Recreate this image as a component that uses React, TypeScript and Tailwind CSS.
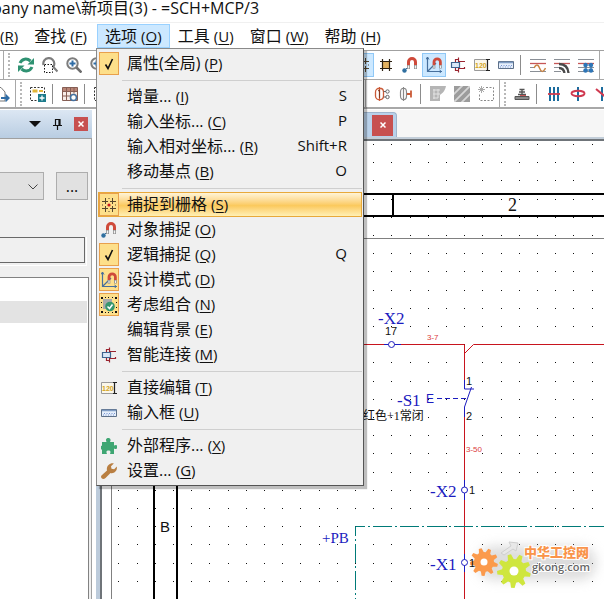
import type { ReactNode } from "react";
import { clsx } from "clsx";

function Svg({ children, size = 16 }: { children: ReactNode; size?: number }) {
  return (
    <svg width={size} height={size} viewBox="0 0 16 16" fill="none" className="shrink-0" aria-hidden="true">
      {children}
    </svg>
  );
}

const CheckIcon = () => (
  <Svg>
    <path d="M4.5 8.5l2.5 4 4.500-9.500" stroke="#111" strokeWidth="1.600" />
  </Svg>
);

const GridIcon = () => (
  <Svg>
    <path d="M4.500 1v6M1 4.500h6M11.500 1v6M9 4.500h6M4.500 9v6M1 11.500h6M11.500 9v6M9 11.500h6" stroke="#54452c" />
    <path d="M8 1v1M8 14v1M1 8h1M14 8h1" stroke="#54452c" />
    <circle cx="8" cy="8" r="1.600" fill="#c81e1e" />
  </Svg>
);

const MagnetIcon = () => (
  <Svg>
    <path d="M6.500 8V5a3.500 3.500 0 0 1 7 0v3" stroke="#cf4a3a" strokeWidth="3" />
    <path d="M6.500 8v4M13.500 8v4" stroke="#8a8a8a" strokeWidth="3" />
    <path d="M6.500 8.500v3M13.500 8.500v3" stroke="#f2f2f2" strokeWidth="1.500" />
    <circle cx="2.500" cy="13.500" r="2.200" fill="#2f6f9f" />
    <path d="M3 13l2-2" stroke="#2f6f9f" />
  </Svg>
);

const DesignIcon = () => (
  <Svg>
    <path d="M1.500 0v14.500H16M1.500 14.500L10 6" stroke="#466f9c" strokeWidth="1.200" />
    <path d="M0 2.500L1.500 0 3 2.500M13.500 13l2 1.500-2 1.500" stroke="#466f9c" />
    <path d="M8 8V5a3.200 3.200 0 0 1 6.400 0v3" stroke="#cf4a3a" strokeWidth="2.800" />
    <path d="M8 8v3.500M14.400 8v3.500" stroke="#888" strokeWidth="2.600" />
    <path d="M8 8.500v2.500M14.400 8.500v2.500" stroke="#fff" />
  </Svg>
);

const GroupIcon = () => (
  <Svg>
    <path d="M2 2h9v4H7v6H2z" fill="#a9a9a9" />
    <path
      d="M0 0h2v2H0zM4 0h1v1H4zM7 0h1v1H7zM11 0h1v1h-1zM14 0h2v2h-2zM0 14h2v2H0zM4 15h1v1H4zM7 15h1v1H7zM11 15h1v1h-1zM14 14h2v2h-2zM0 5h1v1H0zM0 10h1v1H0zM15 5h1v1h-1zM15 10h1v1h-1z"
      fill="#111"
    />
    <circle cx="9" cy="9.500" r="4.800" fill="#37966f" />
    <path d="M6.500 9.500l2 2 3-4" stroke="#fff" strokeWidth="1.500" />
  </Svg>
);

const ConnectIcon = () => (
  <Svg>
    <path d="M5.500 5.500v-3H9M8.500 .500v4H15M5.500 10.500v3H9M8.500 15.500v-4H15M14.500 10v2" stroke="#9a2530" strokeWidth="1.200" />
    <path d="M1.500 5.500h8v5h-8z" fill="#d9e8f8" stroke="#3d648f" strokeWidth="1.200" />
  </Svg>
);

const EditIcon = () => (
  <Svg>
    <path d="M.5 2.500h13v11H.5z" fill="#fbf7ea" stroke="#9a9a9a" />
    <text x="1" y="11" fontSize="7" fontWeight="700" fontFamily="Liberation Sans, sans-serif" fill="#d3a523">
      120
    </text>
    <path d="M13.500 3v10M12 2.500h4M12 13.500h4" stroke="#222" strokeWidth="1.200" />
  </Svg>
);

const InputBoxIcon = () => (
  <Svg>
    <path d="M.5 4.500h15v7H.5z" fill="#e6effb" stroke="#5d7089" />
    <path d="M1 5.500h14" stroke="#7f9cc4" strokeWidth="1.500" />
    <path d="M3 8.500h11M2 10h11" stroke="#7895d2" strokeDasharray="1 1.500" />
  </Svg>
);

const PuzzleIcon = () => (
  <Svg>
    <path
      d="M1 4h4.500C4 1 6 0 7.300 0S10.500 1 9 4h4v3.500c3-1.500 3.500.5 3.500 1.500s-.5 3-3.500 1.500V16H9c1.300-3-.3-3.500-1.500-3.500S4.500 13 6 16H1v-4.500c-2 .7-2 -4.500 0-3.500z"
      fill="#3fa673"
    />
  </Svg>
);

const WrenchIcon = () => (
  <Svg>
    <path
      d="M.7 15.300c-1.200-1.300-.7-2.500.3-3.300l5-4.500C5 3.500 8.500-.3 12.800.4L10 3.200l.5 2.600 2.700.4L15.800 3.600c.8 4.400-2.700 7.400-6.300 6.400l-5 5c-1.200 1-2.600 1.400-3.800.3z"
      fill="#b97f42"
    />
  </Svg>
);

const RefreshIcon = () => (
  <Svg>
    <path d="M2 6C4 1.500 9 1 12.500 4" stroke="#2f9272" strokeWidth="3" />
    <path d="M16 1v6.500H9.500z" fill="#2f9272" />
    <path d="M14 10c-2 4.500-7 5-10.500 2" stroke="#2f9272" strokeWidth="3" />
    <path d="M0 15V8.500h6.500z" fill="#2f9272" />
  </Svg>
);

const ZoomAreaIcon = () => (
  <Svg>
    <path d="M1.500 8a5.500 5.500 0 1 1 10.800-1c0 1-.3 2-1 3l4.200 4.500" stroke="#7d7d7d" strokeWidth="2.200" />
    <path d="M2.500 7.500h8v8h-8z" fill="#fff" stroke="#111" strokeDasharray="1.500 1.500" />
  </Svg>
);

const ZoomInIcon = () => (
  <Svg>
    <circle cx="6.500" cy="6.500" r="5.200" stroke="#7d7d7d" strokeWidth="2" />
    <path d="M10.500 10.500l5 5" stroke="#6d6d6d" strokeWidth="2.600" />
    <path d="M6.500 3.500v6M3.500 6.500h6" stroke="#2f6ca5" strokeWidth="2" />
  </Svg>
);

const HashIcon = () => (
  <Svg>
    <path d="M5 5h7v7H5z" fill="#e3b261" />
    <path d="M4.500 2v12M11.500 2v12M2 4.500h12M2 11.500h12" stroke="#2c2010" strokeWidth="1.200" />
  </Svg>
);

const WaveIcon = () => (
  <Svg>
    <path d="M0 2.500h16M0 10.500h5M0 14.500h16" stroke="#8a8f96" />
    <path d="M0 6.500h16" stroke="#c65757" strokeWidth="1.300" />
    <path d="M4 11c2-4 4-4 5.500 0s3.500 5 6 0" stroke="#c98446" strokeWidth="1.500" />
  </Svg>
);

const SignalIcon = () => (
  <Svg>
    <path d="M0 2.500h16M0 10.500h5M0 14.500h7" stroke="#8a8f96" />
    <path d="M0 6.500h16" stroke="#c65757" strokeWidth="1.300" />
    <path d="M5 7c6 0 9 3 9.500 9M5 11c3 0 5 2 5.500 5" stroke="#4a4a4a" strokeWidth="2.400" />
  </Svg>
);

const NodesIcon = () => (
  <Svg>
    <path d="M0 2.500h16M0 10.500h16M0 14.500h16" stroke="#8a8f96" />
    <path d="M0 6.500h16" stroke="#c65757" strokeWidth="1.300" />
    <path d="M8 8h5v5H8z" stroke="#2f6ca5" />
    <g fill="#2e75b6">
      <circle cx="7.500" cy="8" r="2.200" />
      <circle cx="13" cy="8" r="2.200" />
      <circle cx="7.500" cy="13.500" r="2.200" />
      <circle cx="13" cy="13.500" r="2.200" />
    </g>
  </Svg>
);

const ExportIcon = () => (
  <Svg>
    <path d="M1 1.500h6L11 6v9H1z" fill="#fff" stroke="#777" />
    <path d="M7 11h4.500V7.500L16 12l-4.500 4.500V13H7z" fill="#2f6ca5" />
  </Svg>
);

const MacroIcon = () => (
  <Svg>
    <path d="M.5 1.500h14v13H.5z" stroke="#333" strokeDasharray="2 1.500" />
    <path d="M2.500 3.500h5v3h-5zM9 4h4v2H9z" fill="#e2b63a" />
    <path d="M8 8h8v8H8z" fill="#1d7c8c" />
    <path d="M12 9.500v5M9.500 12h5" stroke="#fff" strokeWidth="1.300" />
  </Svg>
);

const TableIcon = () => (
  <Svg>
    <path d="M.5 1.500h15v13H.5z" fill="#f7ece7" />
    <path d="M.5 1.500h15v4H.5z" fill="#b98576" />
    <path d="M.5 1.500h15v13H.5zM.5 5.500h15M.5 10h9M4.500 1.500v13M8.500 1.500v13M12 1.500v6" stroke="#865f55" />
    <circle cx="11.500" cy="11.500" r="3" fill="#fff" stroke="#44719f" strokeWidth="1.600" />
  </Svg>
);

const DeviceIcon = () => (
  <Svg>
    <path d="M5.500 1v14M1.500 6c0-5 8-5 8 0v4c0 5-8 5-8 0z" stroke="#cb5b38" strokeWidth="1.300" />
    <path d="M4 5l1.500-1v8" stroke="#8a3a20" />
    <path d="M9.500 5.500H12M9.500 11H12" stroke="#666" />
    <circle cx="13.500" cy="5.500" r="1.700" stroke="#666" />
    <circle cx="13.500" cy="11" r="1.700" stroke="#666" />
  </Svg>
);

const DevicePinIcon = () => (
  <Svg>
    <path d="M5.500 1v14M2.500 6c0-5 6-5 6 0v4c0 5-6 5-6 0z" stroke="#888" strokeWidth="1.200" />
    <path d="M9 8h4M13 4.500v7" stroke="#cb5b38" strokeWidth="1.800" />
  </Svg>
);

const LayerIcon = () => (
  <Svg>
    <path d="M0 0h16c-1 6-5 8-6 9v6H0z" fill="#b5b5b5" />
    <path d="M3 4h7M3 8h7M3 12h5M4 3v10M8 3v9" stroke="#e3e3e3" />
  </Svg>
);

const HatchIcon = () => (
  <Svg>
    <path d="M0 0h16v16H0z" fill="#9c9c9c" />
    <path d="M-1 9L9-1M-1 17L17-1M7 17L17 7" stroke="#d6d6d6" strokeWidth="1.800" />
  </Svg>
);

const SelectNewIcon = () => (
  <Svg>
    <path d="M8 1.500h7.500v13H1.500V8" stroke="#8a8a8a" strokeDasharray="2 1.500" />
    <path d="M3.500 0v7M0 3.500h7M1 1l5 5M6 1L1 6" stroke="#aaa" />
  </Svg>
);

const PlatformIcon = () => (
  <Svg>
    <path d="M1 10.500h14v3H1z" fill="#8c8c8c" stroke="#555" />
    <path d="M4 8.500h8M8 3v6M5.500 3.500h5M5 6h6" stroke="#555" strokeWidth="1.400" />
    <path d="M6 9.500h6" stroke="#c65757" />
  </Svg>
);

const BusIcon = () => (
  <Svg>
    <path d="M4 1v14M8 1v14M12 1v14" stroke="#1b6c9e" strokeWidth="2" />
    <path d="M2 8h12" stroke="#d03a50" strokeWidth="1.800" />
  </Svg>
);

const LoopIcon = () => (
  <Svg>
    <path d="M8 1v14" stroke="#1b6c9e" strokeWidth="2" />
    <ellipse cx="8" cy="7.500" rx="6.500" ry="2.700" stroke="#d03a50" strokeWidth="1.900" />
  </Svg>
);

const BranchIcon = () => (
  <Svg>
    <path d="M8 1v14" stroke="#1b6c9e" strokeWidth="2" />
    <path d="M2 3l12 10" stroke="#d03a50" strokeWidth="2" />
  </Svg>
);

function Tool({ label, active, children }: { label: string; active?: boolean; children: ReactNode }) {
  return (
    <button
      aria-label={label}
      className={clsx(
        "flex h-6 w-6 shrink-0 items-center justify-center border",
        active ? "border-[#90c8f6] bg-[#cce8ff]" : "border-transparent"
      )}
    >
      {children}
    </button>
  );
}

const Separator = () => <span className="mr-[5px] ml-0.5 h-5 w-px shrink-0 bg-[#8c8c8c]" />;

function Grip() {
  return (
    <>
      <span className="mx-px w-px shrink-0 self-stretch bg-[#a8a8a8]" />
      <span className="mr-1 ml-[3px] h-6 shrink-0 border-l-2 border-dotted border-[#b8b8b8]" />
    </>
  );
}

function Toolbars() {
  return (
    <div className="border-t border-[#a0a0a0] bg-white">
      <div className="flex h-[29px] items-center border-b border-[#a8a8a8] pl-0.5">
        <Grip />
        <Tool label="刷新"><RefreshIcon /></Tool>
        <Tool label="缩放区域"><ZoomAreaIcon /></Tool>
        <Tool label="放大"><ZoomInIcon /></Tool>
        <Tool label="缩小"><ZoomInIcon /></Tool>
        <span className="w-60 shrink-0" />
        <Tool label="捕捉到栅格" active><GridIcon /></Tool>
        <Tool label="栅格"><HashIcon /></Tool>
        <Tool label="对象捕捉"><MagnetIcon /></Tool>
        <Tool label="设计模式" active><DesignIcon /></Tool>
        <Tool label="智能连接"><ConnectIcon /></Tool>
        <Tool label="直接编辑"><EditIcon /></Tool>
        <Tool label="输入框"><InputBoxIcon /></Tool>
        <Separator />
        <Tool label="波形"><WaveIcon /></Tool>
        <Tool label="信号"><SignalIcon /></Tool>
        <Tool label="节点"><NodesIcon /></Tool>
        <span className="ml-px w-px self-stretch bg-[#a8a8a8]" />
      </div>
      <div className="flex h-[29px] items-center border-b-2 border-[#a8a8a8]">
        <span className="-ml-2.5 flex shrink-0"><Tool label="导出"><ExportIcon /></Tool></span>
        <Grip />
        <Tool label="宏"><MacroIcon /></Tool>
        <Separator />
        <Tool label="表格"><TableIcon /></Tool>
        <Separator />
        <Tool label="选择"><MacroIcon /></Tool>
        <span className="w-[251px] shrink-0" />
        <span className="mr-1 w-px shrink-0 self-stretch bg-[#a8a8a8]" />
        <Tool label="设备"><DeviceIcon /></Tool>
        <Tool label="设备连接点"><DevicePinIcon /></Tool>
        <Separator />
        <Tool label="图层"><LayerIcon /></Tool>
        <Tool label="填充"><HatchIcon /></Tool>
        <Tool label="新建选择"><SelectNewIcon /></Tool>
        <Grip />
        <Tool label="安装"><PlatformIcon /></Tool>
        <Separator />
        <Tool label="母线"><BusIcon /></Tool>
        <Tool label="屏蔽"><LoopIcon /></Tool>
        <Tool label="分支"><BranchIcon /></Tool>
      </div>
    </div>
  );
}

type MenuEntry = {
  label: string;
  mnemonic: string;
  shortcut?: string;
  icon?: ReactNode;
  checked?: boolean;
  selected?: boolean;
};

const menuGroups: MenuEntry[][] = [
  [{ label: "属性(全局)", mnemonic: "P", icon: <CheckIcon />, checked: true }],
  [
    { label: "增量...", mnemonic: "I", shortcut: "S" },
    { label: "输入坐标...", mnemonic: "C", shortcut: "P" },
    { label: "输入相对坐标...", mnemonic: "R", shortcut: "Shift+R" },
    { label: "移动基点", mnemonic: "B", shortcut: "O" },
  ],
  [
    { label: "捕捉到栅格", mnemonic: "S", icon: <GridIcon />, checked: true, selected: true },
    { label: "对象捕捉", mnemonic: "O", icon: <MagnetIcon /> },
    { label: "逻辑捕捉", mnemonic: "Q", shortcut: "Q", icon: <CheckIcon />, checked: true },
    { label: "设计模式", mnemonic: "D", icon: <DesignIcon />, checked: true },
    { label: "考虑组合", mnemonic: "N", icon: <GroupIcon />, checked: true },
    { label: "编辑背景", mnemonic: "E" },
    { label: "智能连接", mnemonic: "M", icon: <ConnectIcon /> },
  ],
  [
    { label: "直接编辑", mnemonic: "T", icon: <EditIcon /> },
    { label: "输入框", mnemonic: "U", icon: <InputBoxIcon /> },
  ],
  [
    { label: "外部程序...", mnemonic: "X", icon: <PuzzleIcon /> },
    { label: "设置...", mnemonic: "G", icon: <WrenchIcon /> },
  ],
];

function Mnemonic({ letter }: { letter: string }) {
  return (
    <span className="text-[15px]">
      (<span className="underline underline-offset-2">{letter}</span>)
    </span>
  );
}

function OptionsMenu() {
  return (
    <div className="absolute top-full -left-px z-10 w-[268px] border border-[#8a8a8a] border-r-[#555] border-b-[#555] bg-[#f0f0f0] px-px py-0.5 shadow-[3px_3px_1px_rgba(0,0,0,0.25)]">
      {menuGroups.map((group, index) => (
        <div key={index}>
          {index > 0 && (
            <div className="flex h-2 items-center pl-6">
              <div className="h-px w-full bg-[#cfcfcf]" />
            </div>
          )}
          {group.map((item) => (
            <button
              key={item.label}
              className={clsx(
                "flex h-[25px] w-full items-center border pr-3.5 text-left",
                item.selected
                  ? "border-[#e8a93a] bg-linear-to-b from-[#fff4d6] via-[#fbc95c] via-55% to-[#fff0b4]"
                  : "border-transparent"
              )}
            >
              <span
                className={clsx(
                  "mr-2 flex h-[23px] w-5 shrink-0 items-center justify-center border",
                  item.checked ? "border-[#e8a04c] bg-[#fddf8a]" : "border-transparent"
                )}
              >
                {item.icon}
              </span>
              <span className="pb-0.5 whitespace-nowrap">
                {item.label} <Mnemonic letter={item.mnemonic} />
              </span>
              {item.shortcut && <span className="ml-auto pb-0.5 text-[15px]">{item.shortcut}</span>}
            </button>
          ))}
        </div>
      ))}
    </div>
  );
}

function MenuBar() {
  return (
    <nav className="flex h-7 items-start border-t border-[#f0f0f0] bg-white pt-px text-base whitespace-nowrap">
      <button className="h-[23px] pr-2"><Mnemonic letter="R" /></button>
      <button className="h-[23px] px-2">查找 <Mnemonic letter="F" /></button>
      <div className="relative ml-0.5">
        <button className="block h-6 border border-[#99d1ff] bg-[#cce8ff] px-[7px] leading-[21px]">
          选项 <Mnemonic letter="O" />
        </button>
        <OptionsMenu />
      </div>
      <button className="h-[23px] px-2">工具 <Mnemonic letter="U" /></button>
      <button className="h-[23px] px-2">窗口 <Mnemonic letter="W" /></button>
      <button className="h-[23px] px-2">帮助 <Mnemonic letter="H" /></button>
    </nav>
  );
}

function SidePanel() {
  return (
    <aside className="flex w-[92px] shrink-0 flex-col">
      <header className="flex h-[28px] items-center justify-end gap-3 bg-linear-to-b from-[#dce7f3] to-[#b9cde2] pr-1">
        <button aria-label="菜单">
          <svg width="12" height="6" aria-hidden="true"><path d="M0 0h12L6 6z" fill="#111" /></svg>
        </button>
        <button aria-label="固定">
          <svg width="9" height="11" aria-hidden="true">
            <path d="M2 .500h5M2.500 0v6M6 0v6M7 0v6M0 6.500h9M4.500 7v4" stroke="#111" strokeWidth="1.200" />
          </svg>
        </button>
        <button aria-label="关闭" className="flex h-3.5 w-3.5 items-center justify-center bg-[#c75050] text-white">
          <svg width="6" height="6" aria-hidden="true"><path d="M.5.5l5 5M5.500.5l-5 5" stroke="currentColor" strokeWidth="1.500" /></svg>
        </button>
      </header>
      <div className="flex flex-1 flex-col border-t border-r border-[#a0a0a0] bg-[#f0f0f0] pt-[33px]">
        <div className="flex items-center justify-between pr-[3px]">
          <div className="relative">
            <select aria-label="筛选" className="block h-7 w-11 appearance-none border border-l-0 border-[#adadad] bg-[#e1e1e1]" />
            <svg width="10" height="6" className="pointer-events-none absolute top-3 right-1.5" aria-hidden="true">
              <path d="M.5.5L5 5l4.500-4.500" fill="none" stroke="#444" />
            </svg>
          </div>
          <button className="h-7 w-8 border border-[#adadad] bg-[#e1e1e1] text-base leading-5">...</button>
        </div>
        <div className="mt-[37px] mr-1 border-r border-b border-white pr-px pb-0.5">
          <input aria-label="值" className="block h-[26px] w-full border border-l-0 border-[#696969] bg-[#f0f0f0]" />
        </div>
        <div className="mt-[11px] mr-0.5 flex-1 border-t border-r border-[#828282] bg-white pt-[23px] pr-px">
          <div className="h-[22px] bg-[#e3e3e3]" />
        </div>
      </div>
    </aside>
  );
}

const GRID_STEP = 18.2;
const gridDots = Array.from({ length: 60 * 50 }, (_, i) => {
  const x = Math.round(118.4 + (i % 60) * GRID_STEP);
  const y = Math.round(144 + Math.floor(i / 60) * GRID_STEP);
  return `M${x} ${y}h1v1h-1z`;
}).join("");

function gearPath(cx: number, cy: number, outer: number, inner: number, teeth: number) {
  const points: string[] = [];
  for (let i = 0; i < teeth; i++) {
    const start = (i / teeth) * Math.PI * 2;
    const step = (Math.PI * 2) / teeth;
    [
      [0, inner],
      [0.2, outer],
      [0.5, outer],
      [0.7, inner],
    ].forEach(([offset, radius]) => {
      const angle = start + offset * step;
      points.push(`${(cx + radius * Math.cos(angle)).toFixed(1)} ${(cy + radius * Math.sin(angle)).toFixed(1)}`);
    });
  }
  return `M${points.join("L")}Z`;
}

function Watermark() {
  return (
    <g>
      <defs>
        <filter id="soft" x="-30%" y="-60%" width="160%" height="220%">
          <feGaussianBlur stdDeviation="6" />
        </filter>
      </defs>
      <rect x="478" y="546" width="118" height="34" rx="16" fill="#bbb" opacity="0.5" filter="url(#soft)" />
      <path d="M501 553l10-7-2-4 9 1-2 8-3-2-9 6z" fill="#e8e8e8" stroke="#cfcfcf" />
      <path d={gearPath(484, 562, 14, 10, 9)} fill="#fb9a4c" />
      <circle cx="484" cy="562" r="3.500" fill="#fff" />
      <path d={gearPath(514, 571, 17, 12, 9)} fill="#cfe63e" />
      <circle cx="514" cy="571" r="4.500" fill="#fff" />
      <text x="524" y="557" fontSize="13" fontWeight="900" fontFamily="Noto Sans CJK SC, sans-serif" fill="#f9944a" stroke="#fff" strokeWidth="2" paintOrder="stroke">
        中华工控网
      </text>
      <text x="532" y="571" fontSize="11" fontWeight="600" fontFamily="Open Sans, sans-serif" fill="#666" stroke="#fff" strokeWidth="2" paintOrder="stroke">
        gkong.com
      </text>
    </g>
  );
}

function Schematic() {
  return (
    <svg className="min-h-0 w-full flex-1 bg-white" role="img" aria-label="SCH+MCP/3">
      <g transform="translate(-102 -141)" fill="none">
        <path d={gridDots} fill="#111" />
        <path d="M111.500 141V1400M111 238.500H2000" stroke="#808080" />
        <path d="M154 1400V194H2000M177 1400V216H2000M393 194v22" stroke="#000" strokeWidth="2" />
        <path d="M180 344.500h284.500V380M464.500 353.500l9-9H2000M464.500 417V1400" stroke="#c8141e" />
        <path d="M384 344.500h17M464.500 380v9H474M471.500 387l-7 20v10M464.500 480v20M464.500 554v18" stroke="#1c1cc0" />
        <path d="M437 398.500h29" stroke="#1c1cc0" strokeDasharray="5 3" />
        <g fill="#fff" stroke="#1c1cc0">
          <circle cx="391.500" cy="344.500" r="3" />
          <circle cx="464.500" cy="490" r="3" />
          <circle cx="464.500" cy="562.500" r="3" />
        </g>
        <path d="M355.500 1400V526.500H2000" stroke="#007a78" strokeDasharray="19 3 2 3" />
        <Watermark />
        <g fill="#1c1cc0" fontFamily="Liberation Serif, serif" fontSize="17">
          <text x="378" y="324">-X2</text>
          <text x="397" y="406">-S1</text>
          <text x="430" y="497">-X2</text>
          <text x="430" y="570">-X1</text>
        </g>
        <text x="322" y="543" fontSize="15" fontFamily="Liberation Serif, serif" fill="#1c1cc0">+PB</text>
        <text x="426" y="403" fontSize="12" fontFamily="Liberation Sans, sans-serif" fill="#1c1cc0">E</text>
        <g fill="#111" fontFamily="Liberation Sans, sans-serif" fontSize="11">
          <text x="385" y="335">17</text>
          <text x="466" y="385">1</text>
          <text x="466" y="420">2</text>
          <text x="469" y="494">1</text>
          <text x="469" y="567">1</text>
        </g>
        <text x="363" y="420" fontSize="12" fontFamily="Liberation Serif, Noto Sans CJK SC, serif" fill="#111">红色+1常闭</text>
        <text x="508" y="211" fontSize="18" fontFamily="Liberation Serif, serif" fill="#111">2</text>
        <text x="160" y="532" fontSize="15" fontFamily="Liberation Sans, sans-serif" fill="#111">B</text>
        <g fill="#dc3c3c" fontFamily="Liberation Sans, sans-serif" fontSize="8">
          <text x="427" y="340">3-7</text>
          <text x="466" y="452">3-50</text>
        </g>
      </g>
    </svg>
  );
}

function DocumentArea() {
  return (
    <main className="ml-1 flex min-w-0 flex-1 flex-col">
      <div className="flex h-[29px] items-end border-b-2 border-[#c3ced9] bg-[#f6f6f6]">
        <div className="flex h-[25px] w-[301px] items-center justify-end rounded-tr border-t border-r border-[#9fb4cc] bg-[#b9d1ea] pr-[3px]">
          <button aria-label="关闭" className="flex h-[21px] w-[21px] items-center justify-center bg-[#c75050] text-white">
            <svg width="6" height="6" aria-hidden="true"><path d="M.5.5l5 5M5.500.5l-5 5" stroke="currentColor" strokeWidth="1.500" /></svg>
          </button>
        </div>
      </div>
      <div className="flex flex-1 border-l-4 border-[#bccbdb]">
        <div className="flex flex-1 flex-col border-t-2 border-l-2 border-[#6f7479]">
          <Schematic />
        </div>
      </div>
    </main>
  );
}

export default function App() {
  return (
    <div className="flex h-screen flex-col overflow-hidden bg-white font-['Open_Sans','Noto_Sans_CJK_SC',sans-serif] text-base text-[#111]">
      <h1 className="-ml-2 h-[22px] shrink-0 leading-4 whitespace-nowrap">pany name\新项目(3) - =SCH+MCP/3</h1>
      <MenuBar />
      <Toolbars />
      <div className="flex min-h-0 flex-1 pt-px">
        <SidePanel />
        <DocumentArea />
      </div>
    </div>
  );
}
